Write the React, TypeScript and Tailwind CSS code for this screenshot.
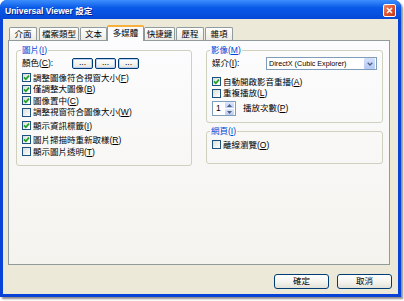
import React from 'react';

const FONT = "font-['Liberation_Sans','Noto_Sans_CJK_TC',sans-serif]";

const Key: React.FC<{ k: string }> = ({ k }) => (
  <>
    (<span className="underline underline-offset-1">{k}</span>)
  </>
);

const Check: React.FC<{ checked?: boolean }> = ({ checked }) => (
  <span className="w-[9px] h-[9px] shrink-0 border border-[#1c5180] bg-linear-to-br from-[#dcdcd7] to-white flex items-center justify-center">
    {checked && (
      <svg width="7" height="7" viewBox="0 0 7 7">
        <path d="M1 3.4 L2.8 5.2 L6 1.6" fill="none" stroke="#21a121" strokeWidth="1.7" />
      </svg>
    )}
  </span>
);

const CheckRow: React.FC<{ checked?: boolean; label: string; k: string; className?: string }> = ({
  checked,
  label,
  k,
  className = '',
}) => (
  <label className={`flex items-center gap-[2px] h-[11.5px] whitespace-nowrap ${className}`}>
    <Check checked={checked} />
    <span>
      {label}
      <Key k={k} />
    </span>
  </label>
);

const tabs = [
  { label: '介面', w: 'w-[28px]', ml: '' },
  { label: '檔案類型', w: 'w-[40px]', ml: 'ml-[2px]' },
  { label: '文本', w: 'w-[27px]', ml: 'ml-[1px]' },
  { label: '多媒體', w: 'w-[37px]', ml: '', active: true },
  { label: '快捷鍵', w: 'w-[31px]', ml: '' },
  { label: '歷程', w: 'w-[28px]', ml: 'ml-[1px]' },
  { label: '雜項', w: 'w-[28px]', ml: 'ml-[1px]' },
];

const XpButton: React.FC<{ children: React.ReactNode; className?: string }> = ({ children, className = '' }) => (
  <div
    className={`flex items-center justify-center border border-[#003c74] bg-linear-to-b from-white via-[#f5f4ef] to-[#e3e2d9] ${className}`}
  >
    {children}
  </div>
);

export default function App() {
  return (
    <div className={`w-[404px] h-[301px] bg-white text-black text-[8.5px] leading-none ${FONT}`}>
      <div className="w-[401px] h-[297px] flex flex-col bg-[#0842d6] rounded-t-[7px] shadow-[2px_2px_2px_rgba(0,0,0,0.45)]">
        {/* title bar */}
        <div className="h-[19px] flex items-center justify-between rounded-t-[7px] bg-linear-to-b from-[#3c8ffc] via-[#0a5ae9] via-40% to-[#0648d8] pl-[5px] pr-[5px]">
          <span className="text-white font-bold text-[8.5px] pt-[3px] [text-shadow:1px_1px_0_#0a1e8a]">
            Universal Viewer 設定
          </span>
          <div className="w-[13px] h-[13px] mt-[2px] rounded-[2px] border border-white bg-linear-to-br from-[#ec8a6c] via-[#e0552f] to-[#c2381a] flex items-center justify-center">
            <svg width="7" height="7" viewBox="0 0 7 7">
              <path d="M1 1 L6 6 M6 1 L1 6" stroke="white" strokeWidth="1.5" />
            </svg>
          </div>
        </div>

        {/* dialog body */}
        <div className="mx-[3px] h-[275px] bg-[#ece9d8] flex flex-col pl-[5px]">
          {/* tabs */}
          <div className="h-[21px] flex items-end ml-[1px]">
            {tabs.map(t =>
              t.active ? (
                <div
                  key={t.label}
                  className={`${t.w} h-[16px] -mb-px relative z-10 flex items-center justify-center border-x border-[#919b9c] border-t-[2px] border-t-[#f5b13c] rounded-t-[2px] bg-[#fcfcfe] pb-[1px]`}
                >
                  {t.label}
                </div>
              ) : (
                <div
                  key={t.label}
                  className={`${t.w} ${t.ml} h-[13px] flex items-center justify-center border-x border-t border-[#919b9c] rounded-t-[2px] bg-linear-to-b from-white to-[#ecebe5]`}
                >
                  {t.label}
                </div>
              )
            )}
          </div>

          {/* tab panel */}
          <div className="w-[382px] h-[225px] border border-[#919b9c] bg-linear-to-b from-[#fcfcfe] to-[#f4f3ee] flex gap-[14px] pt-[4px] pl-[7px] pr-[6px]">
            {/* 圖片 */}
            <fieldset className="w-[176px] self-start border border-[#d0d0bf] rounded-[3px] pl-[5px] pr-[4px] pt-[3px] pb-[7px]">
              <legend className="text-[#0046d5] px-[1px] -ml-[1px] leading-[10px]">
                圖片<Key k="I" />
              </legend>
              <div className="flex items-center h-[11px]">
                <span className="w-[50px]">
                  顏色<Key k="C" />:
                </span>
                <div className="flex gap-[2px]">
                  {[0, 1, 2].map(i => (
                    <XpButton key={i} className="w-[21px] h-[11px] rounded-[2px] shadow-[inset_0_0_0_1px_#bcd0f6] pb-[2px]">
                      ...
                    </XpButton>
                  ))}
                </div>
              </div>
              <div className="flex flex-col mt-[3px]">
                <CheckRow checked label="調整圖像符合視窗大小" k="F" />
                <CheckRow checked label="僅調整大圖像" k="B" />
                <CheckRow checked label="圖像置中" k="C" />
                <CheckRow label="調整視窗符合圖像大小" k="W" />
                <CheckRow checked label="顯示資訊標籤" k="I" className="mt-[2px]" />
                <CheckRow checked label="圖片掃描時重新取樣" k="R" className="mt-[2.5px]" />
                <CheckRow label="顯示圖片透明" k="T" className="mt-[0.5px]" />
              </div>
            </fieldset>

            <div className="w-[177px] flex flex-col">
              {/* 影像 */}
              <fieldset className="border border-[#d0d0bf] rounded-[3px] pl-[5px] pr-[5px] pt-[2px] pb-[6px]">
                <legend className="text-[#0046d5] px-[1px] -ml-[2px] leading-[10px]">
                  影像<Key k="M" />
                </legend>
                <div className="flex items-center h-[13px]">
                  <span className="w-[54px]">
                    媒介<Key k="I" />:
                  </span>
                  <div className="w-[111px] h-[13px] border border-[#7f9db9] bg-white flex items-center justify-between">
                    <span className="pl-[2px] text-[7.2px] whitespace-nowrap">DirectX (Cubic Explorer)</span>
                    <div className="w-[11px] h-[11px] mr-px rounded-[1px] bg-linear-to-b from-[#d4e0fb] to-[#b5c8f4] flex items-center justify-center">
                      <svg width="6" height="4" viewBox="0 0 6 4">
                        <path d="M0.7 0.7 L3 3 L5.3 0.7" fill="none" stroke="#4d6185" strokeWidth="1.3" />
                      </svg>
                    </div>
                  </div>
                </div>
                <div className="flex flex-col mt-[6px]">
                  <CheckRow checked label="自動開啟影音重播" k="A" />
                  <CheckRow label="重複播放" k="L" />
                </div>
                <div className="flex items-center mt-[2px] h-[15px]">
                  <div className="w-[24px] h-[15px] border border-[#7f9db9] bg-white flex items-center justify-between">
                    <span className="pl-[3px]">1</span>
                    <div className="w-[9px] h-[13px] flex flex-col gap-px mr-px">
                      <div className="flex-1 rounded-[1px] bg-linear-to-b from-[#dfe7fb] to-[#b9cbf4] flex items-center justify-center">
                        <svg width="5" height="3" viewBox="0 0 5 3">
                          <path d="M0 3 L2.5 0 L5 3 Z" fill="#4d6185" />
                        </svg>
                      </div>
                      <div className="flex-1 rounded-[1px] bg-linear-to-b from-[#dfe7fb] to-[#b9cbf4] flex items-center justify-center">
                        <svg width="5" height="3" viewBox="0 0 5 3">
                          <path d="M0 0 L2.5 3 L5 0 Z" fill="#4d6185" />
                        </svg>
                      </div>
                    </div>
                  </div>
                  <span className="ml-[7px]">
                    播放次數<Key k="P" />
                  </span>
                </div>
              </fieldset>

              {/* 網頁 */}
              <fieldset className="mt-[3px] border border-[#d0d0bf] rounded-[3px] pl-[5px] pr-[5px] pt-[3px] pb-[12px]">
                <legend className="text-[#0046d5] px-[1px] -ml-[2px] leading-[10px]">
                  網頁<Key k="I" />
                </legend>
                <CheckRow label="離線瀏覽" k="O" />
              </fieldset>
            </div>
          </div>

          {/* dialog buttons */}
          <div className="flex justify-end gap-[8px] mt-[9px] pr-[6px]">
            <XpButton className="w-[55px] h-[15px] rounded-[3px]">確定</XpButton>
            <XpButton className="w-[55px] h-[15px] rounded-[3px]">取消</XpButton>
          </div>
        </div>
      </div>
    </div>
  );
}
